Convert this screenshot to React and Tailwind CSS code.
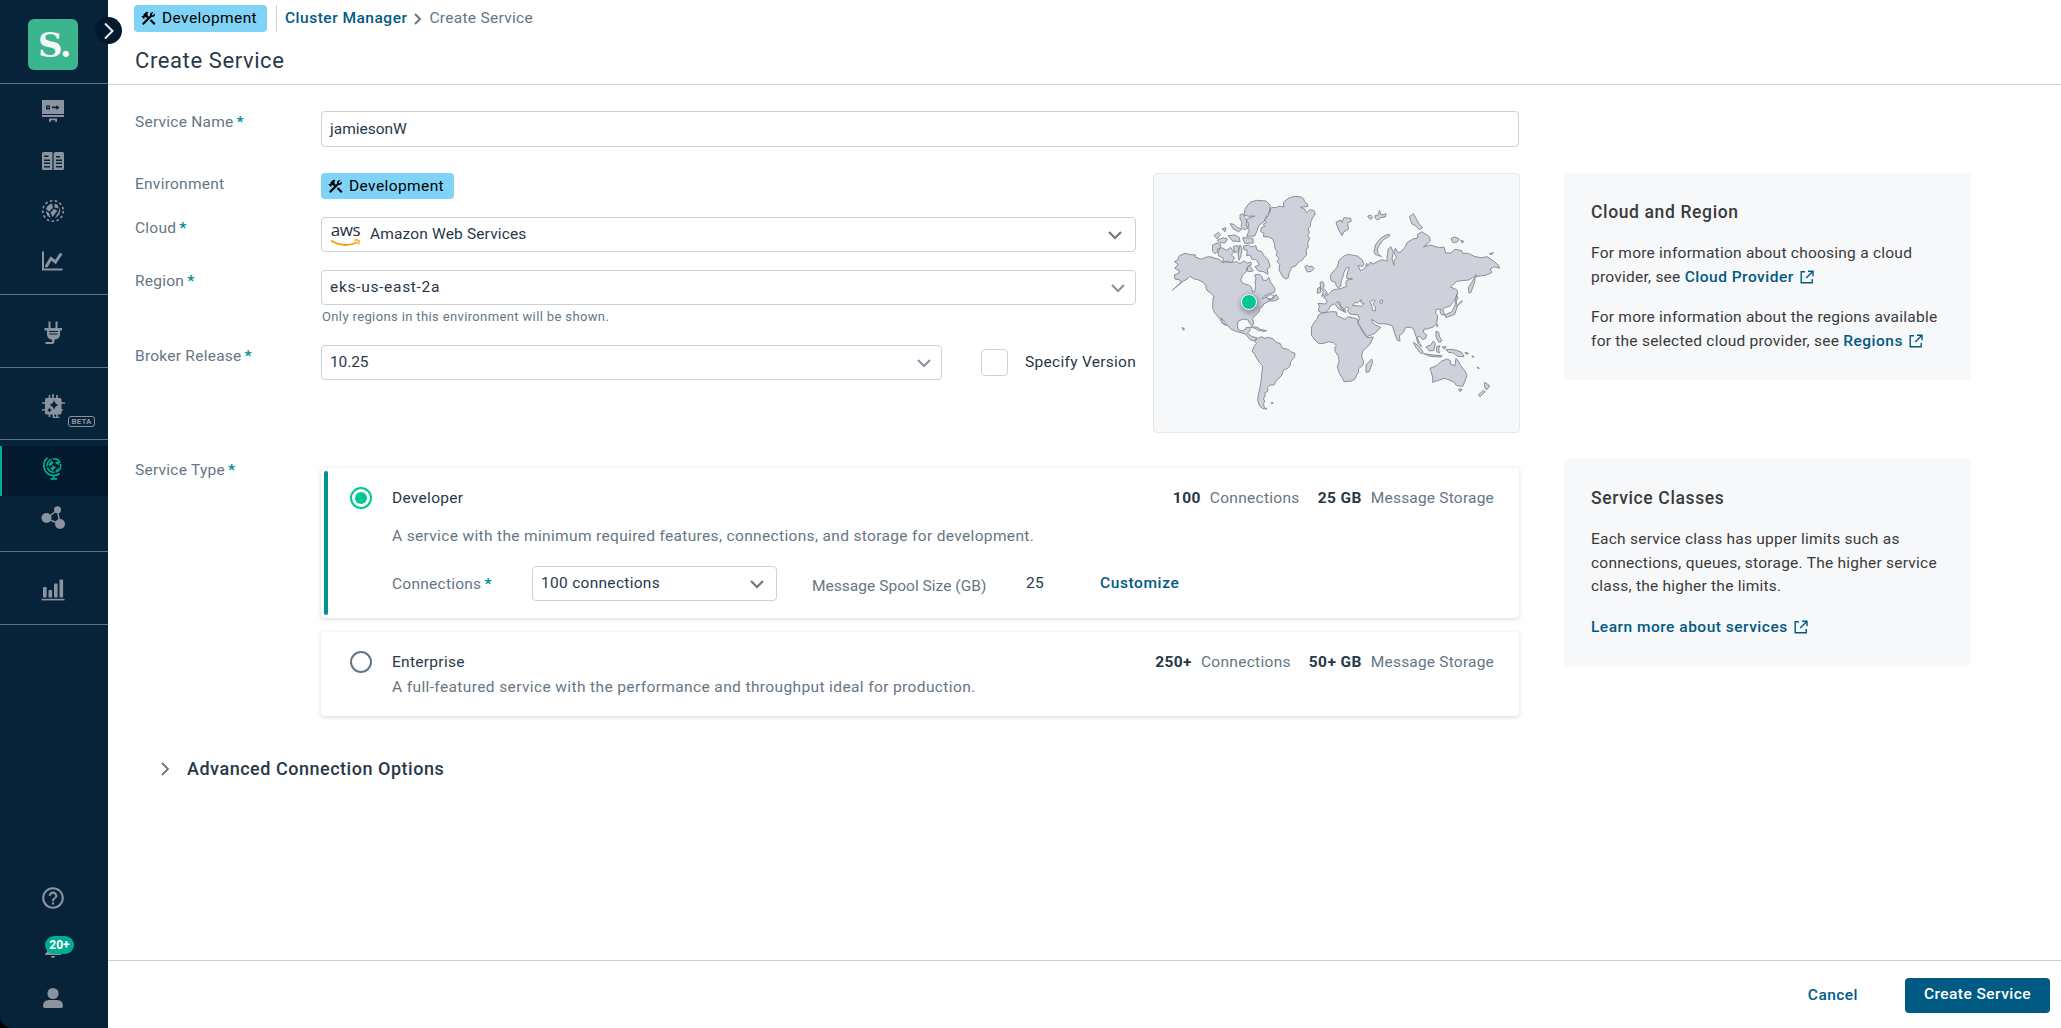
import React, { useState } from "react";
import { MdConstruction, MdHelpOutline, MdNotifications } from "react-icons/md";

const SERVICE_TYPES = [
  {
    id: "developer",
    name: "Developer",
    description:
      "A service with the minimum required features, connections, and storage for development.",
    connections: "100",
    storage: "25 GB",
  },
  {
    id: "enterprise",
    name: "Enterprise",
    description:
      "A full-featured service with the performance and throughput ideal for production.",
    connections: "250+",
    storage: "50+ GB",
  },
];

// Land outlines for the region map
const LAND = [
  // Greenland
  "M390 130L400 127L410 128L418 123L432 126L430 114L440 103L452 97L465 94L483 96L492 103L493 110L502 116L503 124L482 127L494 132L500 143L510 134L522 137L526 147L518 158L512 172L511 184L505 190L508 205L503 212L509 220L503 235L505 246L498 255L500 270L491 278L488 284L474 293L468 302L456 306L448 322L445 338L438 342L428 335L417 315L419 298L411 290L417 280L408 270L412 262L405 250L403 235L398 222L386 216L370 215L372 205L362 200L364 188L374 184L370 178L380 172L372 166L385 152Z",
  // Ellesmere and Baffin
  "M312 150L316 130L330 112L350 106L378 108L390 120L391 140L380 152L372 170L357 180L352 195L344 213L320 214L328 195L318 180L320 162L345 153L325 154Z",
  "M300 150L308 146L316 160L326 176L324 190L312 194L303 184L306 172L300 162Z",
  "M310 243L325 240L333 246L348 242L350 255L365 260L372 272L384 284L391 305L382 312L384 328L370 320L355 318L345 305L358 300L350 285L335 282L330 270L320 272L322 256L312 254Z",
  // arctic islands
  "M232 252L245 248L260 256L272 247L282 262L274 270L284 278L275 292L248 290L250 280L236 272Z",
  "M218 240L232 234L243 240L238 256L225 266L217 258Z",
  "M222 212L235 202L241 208L232 222Z", "M232 226L250 218L262 222L255 234L238 233Z",
  "M264 212L285 210L298 218L300 230L278 228Z", "M246 192L258 188L255 200Z",
  "M270 176L282 178L292 188L306 192L296 200L280 192Z", "M308 218L338 220L340 234L314 235Z",
  "M280 244L294 242L296 260L284 262Z", "M300 240L306 252L302 275L297 286L294 268Z", "M318 312L328 302L340 318L324 320Z",
  // North America
  "M103 290L112 286L118 272L135 265L150 269L167 270L165 276L185 283L196 277L210 275L225 280L240 284L246 293L262 288L270 293L290 290L300 296L312 287L320 294L333 292L334 300L323 304L322 316L308 330L302 345L308 355L325 360L334 366L338 381L344 380L347 365L345 352L348 340L344 330L358 328L366 335L370 346L380 346L386 337L392 352L405 370L403 382L385 387L372 394L366 402L380 396L386 405L398 402L408 388L416 402L402 408L390 408L372 416L367 425L358 430L357 440L345 452L337 460L341 474L337 483L329 475L325 465L310 462L295 468L292 480L295 494L306 498L316 494L318 488L331 487L329 498L322 504L336 515L350 518L345 528L330 524L318 508L300 502L290 500L272 492L262 480L252 468L243 458L247 470L260 482L248 476L238 460L225 445L218 430L219 398L223 396L210 382L200 375L197 362L190 352L176 345L160 341L150 334L142 342L120 354L97 376L124 353L120 345L105 342L103 330L116 325L118 317L104 310L115 298Z",
  // South America
  "M345 528L352 521L365 515L375 520L385 517L400 522L408 532L420 535L428 550L445 553L452 560L465 565L464 575L452 590L451 600L444 610L430 615L426 630L415 642L408 648L402 660L390 660L382 668L384 678L374 684L376 692L370 702L374 708L370 718L374 728L381 732L368 731L358 722L353 705L355 690L359 672L363 650L365 630L368 602L358 592L350 580L343 565L336 560L342 545L349 536Z",
  // Africa
  "M535 450L548 444L575 440L590 441L590 452L600 456L615 463L625 455L652 462L656 478L668 500L682 518L700 516L690 537L680 548L668 558L665 575L671 590L669 600L655 612L656 622L650 630L645 642L635 648L612 650L606 638L598 625L592 605L597 590L596 575L586 560L584 550L589 542L580 533L565 530L548 536L535 535L524 524L514 510L515 485L524 470L532 462Z",
  // Europe and Asia
  "M535 438L538 425L534 415L555 417L562 411L556 400L550 397L566 388L575 378L582 374L595 372L605 370L620 364L617 353L622 345L638 342L620 340L621 328L628 308L620 308L612 322L609 334L604 347L602 364L595 368L588 362L587 352L575 348L571 340L573 328L592 306L597 286L612 273L625 268L640 271L652 273L666 284L672 297L668 304L654 302L662 318L676 308L680 294L683 304L693 291L697 298L712 290L726 284L742 289L741 276L745 252L752 245L760 260L756 282L762 301L762 286L770 280L762 262L766 250L775 264L785 258L797 244L800 234L818 222L833 219L833 208L846 200L868 215L871 228L860 238L850 246L869 240L880 243L898 248L912 246L917 264L932 264L945 253L965 257L968 265L985 265L1005 275L1025 278L1042 275L1060 288L1077 302L1078 310L1064 305L1050 312L1056 322L1040 330L1025 332L1005 336L1004 350L993 382L987 384L985 368L998 348L1010 328L998 338L985 345L950 349L931 366L950 374L953 384L944 405L930 423L915 428L908 434L914 448L905 450L900 440L902 432L888 433L887 445L893 452L890 475L880 486L860 492L852 492L850 502L860 510L857 520L848 524L838 513L832 516L838 533L845 546L834 535L828 514L820 491L812 487L797 487L790 502L778 512L780 528L772 526L764 505L758 483L740 477L715 476L695 463L698 473L706 480L722 487L705 505L680 515L668 495L654 474L658 460L655 450L630 447L622 437L628 430L620 426L614 431L617 443L609 438L602 426L600 412L590 411L610 430L612 440L596 432L584 416L570 424L566 434L558 442L545 443Z",
  // islands
  "M540 352L548 350L552 360L551 370L560 380L562 386L545 394L550 380L542 368Z", "M533 370L541 366L542 382L532 385Z",
  "M494 305L500 301L508 305L516 303L522 311L514 319L502 321Z",
  "M588 172L602 165L606 172L612 158L632 160L634 168L622 175L626 192L612 200L606 212L596 195Z",
  "M683 153L692 150L698 158L690 163Z", "M705 152L715 150L718 136L724 150L738 146L736 156L722 158L714 165L706 160Z",
  "M808 155L820 146L828 160L836 175L848 188L838 194L826 182L815 176Z",
  "M702 262L706 240L720 222L735 211L748 208L748 214L730 224L718 240L712 255L714 265L724 275L706 268Z",
  "M933 220L945 216L958 222L950 232L938 232Z", "M962 226L972 229L966 234Z", "M1048 266L1060 263L1056 269Z",
  "M950 388L954 400L948 408L952 425L944 448L918 458L914 450L936 440L945 420Z", "M962 410L968 408L950 425Z",
  "M678 600L695 582L698 590L688 620L678 622Z",
  "M820 532L835 542L850 562L843 566L828 548Z", "M850 566L880 570L906 572L905 576L870 574Z",
  "M858 546L872 540L880 528L886 536L882 556L868 558Z", "M890 545L900 542L896 552L898 564L890 560Z",
  "M888 498L896 502L898 514L906 528L896 532L888 515Z", "M890 478L894 480L891 486Z",
  "M906 546L918 545L914 552Z", "M918 554L935 553L950 556L965 562L972 575L952 574L940 564L925 562Z", "M975 562L986 565L978 568Z",
  "M870 610L890 602L905 588L922 582L932 588L930 596L945 602L948 580L955 588L962 602L975 618L981 632L975 648L968 664L950 662L940 650L930 646L915 640L895 646L878 652L878 636Z",
  "M956 672L966 673L961 680Z", "M1034 652L1049 662L1040 675L1034 666Z", "M1015 690L1030 676L1036 680L1020 695Z",
  "M332 486L350 486L366 496L360 498L345 490Z", "M362 494L372 495L380 497L368 500Z",
  "M126 487L134 492L130 496Z", "M393 713L400 713L397 717Z", "M996 572L1002 576L998 577Z", "M1012 606L1018 610L1013 610Z",
];

// Black Sea, Caspian, Aral
const WATER = [
  "M637 422L645 412L652 414L665 403L662 412L673 417L664 424L648 422Z",
  "M690 412L700 404L706 408L698 416L706 425L706 438L697 436L696 424Z",
  "M720 406L728 405L727 414L720 415Z",
  "M378 395L392 389L402 391L395 401L384 402Z",
];

function WorldMap() {
  return (
    <div className="relative h-[260px] w-[367px] shrink-0 rounded border border-[#e6e7ea] bg-[#f7f8fa]">
      <svg className="absolute -inset-px" width="367" height="260" viewBox="39 24 1101 780">
        <g stroke="#84919b" strokeWidth="3" strokeLinejoin="round">
          <path d={LAND.join("")} fill="#cfd1da" />
          <path d={WATER.join("")} fill="#f7f8fa" />
        </g>
      </svg>
      <span className="absolute left-[87px] top-[120px] size-4 rounded-full border border-white bg-[#00c895] shadow-[1px_2px_5px_2px_rgba(60,70,80,0.4)]" />
    </div>
  );
}

function Icon({ children, className = "" }) {
  return (
    <svg
      width="24"
      height="24"
      viewBox="0 0 24 24"
      fill="currentColor"
      className={className}
    >
      {children}
    </svg>
  );
}

const DesignerIcon = () => (
  <Icon>
    <path fillRule="evenodd" d="M1 1h22v14H1zM5 6.4v4h4v-4zM6.4 7.7h1.4v1.4H6.4zM11 7.6v1.6h4.4V11l3.2-2.6L15.4 6v1.6z" />
    <path d="M1 16h22v2H1zM8 19.5h8V23h-1.8v-1.7H9.8V23H8z" />
  </Icon>
);

const CatalogIcon = () => (
  <Icon>
    <path fillRule="evenodd" d="M1 4.5Q1 3 2.500 3H11.400V21H2.500Q1 21 1 19.500zM3 6.500h4.500V8H3zM3 10.500h6V12H3zM3 13.500h6V15H3zM3 17h6v1.500H3z" />
    <path fillRule="evenodd" d="M12.600 4.500L14 3H21.500Q23 3 23 4.500V19.500Q23 21 21.500 21H12.600zM15 7h4v1.500h-4zM15 10.500h6V12h-6zM15 13.500h6V15h-6zM15 17h6v1.500h-6z" />
  </Icon>
);

const MeshIcon = () => (
  <Icon>
    <circle cx="12" cy="12" r="10.300" fill="none" stroke="currentColor" strokeWidth="1.600" strokeDasharray="2.600 2.400" />
    <path d="M11 4.500L12 9L8 12.500L5 10Q6.500 5.500 11 4.500zM13.500 4.500L17 6L17.500 9.500L13.500 8.500zM5 12L8 14L9.500 18.800Q5 17 5 12zM13 10L16.500 11.500L11.500 18L9.500 13.500zM18.600 8.500Q20.500 13 17 17L14 19L18 12z" />
  </Icon>
);

const InsightsIcon = () => (
  <Icon>
    <path d="M2 2.500v18h19.500" fill="none" stroke="currentColor" strokeWidth="2" />
    <path d="M5.500 17L10 9.500L14.500 13L19.500 5.500" fill="none" stroke="currentColor" strokeWidth="3" strokeLinecap="round" />
  </Icon>
);

const PlugIcon = () => (
  <Icon>
    <path d="M7.500 0.500h2V7h-2zM14.500 0.500h2V7h-2zM3.500 7h17.500v2.500h-2V14q-.6 3.500-4 4.500h-1.600V21q0 2-2 2H4.500v-2h6.500v-2.500H10q-3.500-1-4-4.500V9.500H3.500z" />
    <path d="M8 10.500h9M8.500 13h8" stroke="#07233a" strokeWidth="1" />
  </Icon>
);

const ChipIcon = () => (
  <Icon>
    <path d="M8.500 1v22M12 0v4M16 1v22M1 9h4M1 16h4M20 9h4M20 16h2M12.500 20v3.500h6" fill="none" stroke="currentColor" strokeWidth="1.700" />
    <rect x="4" y="4" width="16.500" height="16.500" rx="1.500" />
    <path d="M13 6q.8 4.200 5 5-4.200.8-5 5-.8-4.200-5-5 4.200-.8 5-5zM8.500 13.500q.5 2 2.500 2.500-2 .5-2.500 2.500-.5-2-2.500-2.500 2-.5 2.500-2.500z" fill="#07233a" />
  </Icon>
);

const GlobeIcon = () => (
  <Icon>
    <path d="M6.500 1.800A10 10 0 0 0 12 19.500Q16 19.800 18.500 17.500" fill="none" stroke="currentColor" strokeWidth="1.700" />
    <path d="M12.500 19v4M9.500 22.800h6.500" stroke="currentColor" strokeWidth="1.800" />
    <circle cx="13" cy="9.500" r="6.800" fill="none" stroke="currentColor" strokeWidth="1.500" strokeDasharray="9 1.200" />
    <path d="M10.500 4.500L12.500 7L9 10.500L7.500 8.500zM14 6L18 5.500L18.500 9L15.500 8zM12 9.500L15 11L11.500 15L9.500 12.500zM18.500 10.500L16.500 15L14 15.500z" />
  </Icon>
);

const ShareIcon = () => (
  <Icon>
    <path d="M5.500 12.500L16.500 4L19 18z" fill="none" stroke="currentColor" strokeWidth="1.500" />
    <circle cx="5.500" cy="12" r="5" />
    <circle cx="16.500" cy="3.700" r="3.500" />
    <circle cx="19" cy="18" r="5" />
  </Icon>
);

const BarsIcon = () => (
  <Icon>
    <path d="M0.500 20.800h23v1.600h-23z" />
    <rect x="2" y="9" width="3.600" height="10.500" rx="1" />
    <rect x="7.500" y="12" width="3.600" height="7.500" rx="1" />
    <rect x="13" y="5.500" width="3.600" height="14" rx="1" />
    <rect x="18.500" y="1.500" width="3.600" height="18" rx="1" />
  </Icon>
);

const UserIcon = () => (
  <Icon>
    <circle cx="12" cy="7.500" r="5.600" />
    <path d="M2 20q0-6 6-6h8q6 0 6 6q0 2-2 2H4q-2 0-2-2z" />
  </Icon>
);

function Chevron({ className = "text-[#72777d]" }) {
  return (
    <svg width="16" height="16" viewBox="0 0 16 16" className={className}>
      <path d="M2 5L8 11L14 5" fill="none" stroke="currentColor" strokeWidth="2.200" />
    </svg>
  );
}

function ExternalIcon() {
  return (
    <svg width="14" height="14" viewBox="0 0 14 14" className="ml-1.5 inline-block align-[-2px]">
      <path
        d="M5 1.800H1.200v11h11V9M8 1.200h5v5M13 1.200L6.200 8"
        fill="none"
        stroke="#015a83"
        strokeWidth="1.400"
      />
    </svg>
  );
}

function NavItem({ icon, active, beta }) {
  return (
    <div
      className={`relative flex h-[50px] items-center justify-center border-l-2 pb-1.5 pr-1 ${
        active
          ? "border-[#00ad93] bg-[#031a2e] text-[#00ad93]"
          : "border-transparent text-[#8b939e]"
      }`}
    >
      {icon}
      {beta && (
        <span className="absolute left-[66px] top-[32px] flex h-[11px] w-[27px] items-center justify-center rounded-[3px] border border-[#8b939e] text-[8px] font-bold tracking-[0.1px]">
          BETA
        </span>
      )}
    </div>
  );
}

function Sidebar() {
  return (
    <div className="h-full w-[108px] shrink-0 bg-black">
      <nav className="relative flex h-full flex-col rounded-bl-[12px] bg-[#07233a]">
        <div className="h-[84px] border-b border-[#5f7280] pl-7 pt-[19px]">
          <div className="flex h-[51px] w-[50px] items-center justify-center rounded-md bg-[#3bb58d] pl-0.5 font-['DejaVu_Serif'] text-[34px] font-bold leading-none tracking-[-1.5px] text-[#f5f7f6]">
            S.
          </div>
        </div>
        <button className="absolute left-[95px] top-[17px] z-10 flex size-[27px] items-center justify-center rounded-full bg-[#031a2e]">
          <svg width="12" height="18" viewBox="0 0 12 18">
            <path d="M2 1.500L9.500 9L2 16.500" fill="none" stroke="#e8ebee" strokeWidth="2" />
          </svg>
        </button>

        <div className="h-[211px] border-b border-[#5f7280] pt-[5px]">
          <NavItem icon={<DesignerIcon />} />
          <NavItem icon={<CatalogIcon />} />
          <NavItem icon={<MeshIcon />} />
          <NavItem icon={<InsightsIcon />} />
        </div>
        <div className="h-[73px] border-b border-[#5f7280] pt-4">
          <NavItem icon={<PlugIcon />} />
        </div>
        <div className="h-[72px] border-b border-[#5f7280] pt-4">
          <NavItem icon={<ChipIcon />} beta />
        </div>
        <div className="h-[112px] border-b border-[#5f7280] pt-1.5">
          <NavItem icon={<GlobeIcon />} active />
          <NavItem icon={<ShareIcon />} />
        </div>
        <div className="h-[73px] border-b border-[#5f7280] pt-4">
          <NavItem icon={<BarsIcon />} />
        </div>

        <div className="mt-auto pb-[2px]">
          <NavItem icon={<MdHelpOutline size={26} />} />
          <div className="relative">
            <NavItem icon={<MdNotifications size={24} />} />
            <span className="absolute left-[45px] top-[10px] flex h-[18px] w-[29px] items-center justify-center rounded-full bg-[#00ad93] text-[12px] font-bold text-white tracking-[0px]">
              20+
            </span>
          </div>
          <NavItem icon={<UserIcon />} />
        </div>
      </nav>
    </div>
  );
}

function EnvironmentBadge({ className = "h-[26px] pt-px" }) {
  return (
    <span
      className={`inline-flex w-[133px] items-center gap-[5px] rounded bg-[#7ed3f7] pl-1.5 tracking-[0.4px] text-black ${className}`}
    >
      <MdConstruction size={17} />
      Development
    </span>
  );
}

function Label({ children, required, className = "w-[186px]" }) {
  return (
    <label className={`shrink-0 leading-[22px] tracking-[0.25px] text-[#667685] ${className}`}>
      {children}
      {required && <span className="ml-[3px] font-bold text-[#009193]">*</span>}
    </label>
  );
}

function Select({ children, className = "", chevron }) {
  return (
    <div
      className={`flex h-[35px] items-center justify-between rounded border border-[#cfd1da] bg-white pl-2 ${className}`}
    >
      <span className="flex items-center">{children}</span>
      <Chevron className={chevron} />
    </div>
  );
}

function AwsLogo() {
  return (
    <span className="mr-[9px] flex w-[31px] flex-col items-center">
      <span className="-mt-1 mb-[3px] font-['Open_Sans'] text-[17px] font-medium leading-[13px] tracking-[-0.4px] text-[#252f3e]">
        aws
      </span>
      <svg width="31" height="8" viewBox="0 0 31 8" className="-mb-1">
        <path d="M1 1.500Q14 9.500 27.500 3.200" fill="none" stroke="#ff9900" strokeWidth="1.800" />
        <path d="M24.500 1.200Q31 -.3 28.500 5.500" fill="none" stroke="#ff9900" strokeWidth="1.200" />
      </svg>
    </span>
  );
}

function HelpPanel({ title, children }) {
  return (
    <aside className="h-[207px] w-[407px] rounded bg-[#f7f8fa] px-[27px] pt-[27px] leading-[23.5px] text-[#3a3a3a]">
      <h3 className="mb-[18px] text-[17.5px] font-medium leading-6 tracking-[0.63px]">{title}</h3>
      <div className="space-y-[17px] tracking-[0.24px]">{children}</div>
    </aside>
  );
}

function HelpLink({ children }) {
  return (
    <a className="font-medium tracking-[0.5px] text-[#015a83]">
      {children}
      <ExternalIcon />
    </a>
  );
}

function ServiceCard({ service, selected, onSelect, children }) {
  return (
    <div
      onClick={onSelect}
      className={`flex rounded bg-white p-[3px] shadow-[0_1px_4px_rgba(40,55,80,0.2)] ${
        selected ? "h-[150px]" : "h-[84px]"
      }`}
    >
      <div className={`w-1 rounded-sm ${selected ? "bg-[#009193]" : ""}`} />
      <div className="flex flex-1 pl-[22px] pr-[22px] pt-4">
        <span
          className={`flex size-[22px] shrink-0 items-center justify-center rounded-full border-2 ${
            selected ? "border-[#00c895]" : "border-[#667685]"
          }`}
        >
          {selected && <span className="size-3 rounded-full bg-[#00c895]" />}
        </span>
        <div className="ml-5 flex-1">
          <div className="flex justify-between leading-[22px]">
            <span>{service.name}</span>
            <span className="flex tracking-[0.2px] text-[#667685]">
              <b className="mr-[9px] font-bold tracking-[0.4px] text-[#273848]">
                {service.connections}
              </b>
              <span className="tracking-[0.3px]">Connections</span>
              <b className="ml-[18px] mr-[9px] font-bold tracking-[0.4px] text-[#273848]">
                {service.storage}
              </b>
              Message Storage
            </span>
          </div>
          <p
            className={`leading-[22px] text-[#667685] ${
              selected ? "mt-4 tracking-[0.34px]" : "mt-[3px] tracking-[0.38px]"
            }`}
          >
            {service.description}
          </p>
          {children}
        </div>
      </div>
    </div>
  );
}

export default function App() {
  const [serviceType, setServiceType] = useState("developer");

  return (
    <div className="flex h-[1028px] w-[2061px] overflow-hidden bg-white font-['Roboto',sans-serif] text-[15.5px] tracking-[0.29px] text-[#273848]">
      <Sidebar />

      <div className="flex flex-1 flex-col">
        <header className="h-[85px] border-b border-[#cfd1da] pl-[26px] pt-[5px]">
          <div className="flex h-[27px] items-center">
            <EnvironmentBadge className="h-[27px]" />
            <span className="ml-[9px] mr-2 h-[27px] w-px bg-[#cfd1da]" />
            <a className="font-medium tracking-[0.5px] text-[#015a83]">Cluster Manager</a>
            <svg width="8" height="12" viewBox="0 0 8 12" className="ml-[7px] mr-[7px]">
              <path d="M1 1L6 6L1 11" fill="none" stroke="#667685" strokeWidth="2" />
            </svg>
            <span className="text-[#667685]">Create Service</span>
          </div>
          <h1 className="mt-[14px] pl-px text-[22px] leading-[29px] tracking-[0.6px]">
            Create Service
          </h1>
        </header>

        <main className="flex flex-1 gap-11 pl-[27px] pt-[26px]">
          <div className="w-[1385px] pr-px">
            <div className="flex">
              <Label required>Service Name</Label>
              <div className="flex h-9 flex-1 items-center rounded border border-[#cfd1da] pl-2 pt-px tracking-[0px]">
                jamiesonW
              </div>
            </div>

            <div className="mt-[26px] flex h-[286px] gap-[17px]">
              <div className="flex-1">
                <div className="flex">
                  <Label>Environment</Label>
                  <EnvironmentBadge />
                </div>
                <div className="mt-[18px] flex">
                  <Label required>Cloud</Label>
                  <Select className="flex-1 pr-3">
                    <AwsLogo />
                    <span className="tracking-[0.15px]">Amazon Web Services</span>
                  </Select>
                </div>
                <div className="mt-[18px] flex">
                  <Label required>Region</Label>
                  <div className="flex-1">
                    <Select className="pr-[9px]" chevron="text-[#8a93a3]">
                      <span className="tracking-[0.7px]">eks-us-east-2a</span>
                    </Select>
                    <p className="h-10 pl-px pt-[3px] text-[13px] leading-[18px] tracking-[0.37px] text-[#667685]">
                      Only regions in this environment will be shown.
                    </p>
                  </div>
                </div>
                <div className="flex">
                  <Label required>Broker Release</Label>
                  <Select className="w-[621px] pr-[9px]" chevron="text-[#8a93a3]">
                    <span className="tracking-[-0.1px]">10.25</span>
                  </Select>
                  <div className="ml-[39px] flex items-center">
                    <span className="mr-[17px] size-[27px] rounded border border-[#cfd1da]" />
                    <span className="whitespace-nowrap">Specify Version</span>
                  </div>
                </div>
              </div>
              <WorldMap />
            </div>

            <div className="flex">
              <Label required>Service Type</Label>
              <div className="mt-[9px] flex-1 space-y-[14px]">
                {SERVICE_TYPES.map((service) => (
                  <ServiceCard
                    key={service.id}
                    service={service}
                    selected={serviceType === service.id}
                    onSelect={() => setServiceType(service.id)}
                  >
                    {service.id === "developer" && (
                      <div className="mt-[19px] flex h-[35px] items-center">
                        <Label required className="w-[140px]">
                          Connections
                        </Label>
                        <Select className="w-[245px] pr-[11px]">100 connections</Select>
                        <span className="ml-[35px] mt-1.5 w-[214px] tracking-[0.03px] text-[#667685]">
                          Message Spool Size (GB)
                        </span>
                        <span className="w-[74px]">25</span>
                        <a className="font-medium tracking-[0.6px] text-[#015a83]">Customize</a>
                      </div>
                    )}
                  </ServiceCard>
                ))}
              </div>
            </div>

            <div className="mt-[41px] flex items-center pl-[26px]">
              <svg width="9" height="14" viewBox="0 0 9 14" className="mr-[17px]">
                <path d="M1 1L7 7L1 13" fill="none" stroke="#667685" strokeWidth="1.800" />
              </svg>
              <h2 className="text-[18px] font-medium leading-6 tracking-[0.52px]">
                Advanced Connection Options
              </h2>
            </div>
          </div>

          <div className="space-y-[79px] pt-[62px]">
            <HelpPanel title="Cloud and Region">
              <p>
                For more information about choosing a cloud
                <br />
                provider, see <HelpLink>Cloud Provider</HelpLink>
              </p>
              <p>
                For more information about the regions available
                <br />
                for the selected cloud provider, see <HelpLink>Regions</HelpLink>
              </p>
            </HelpPanel>
            <HelpPanel title="Service Classes">
              <p>
                Each service class has upper limits such as
                <br />
                connections, queues, storage. The higher service
                <br />
                class, the higher the limits.
              </p>
              <p>
                <HelpLink>Learn more about services</HelpLink>
              </p>
            </HelpPanel>
          </div>
        </main>

        <footer className="flex h-[68px] items-center justify-end border-t border-[#cfd1da] pr-[11px] pt-px font-medium tracking-[0.45px]">
          <button className="mr-[47px] pt-px text-[#015a83]">Cancel</button>
          <button className="h-[35px] w-[145px] rounded bg-[#015a83] text-white">
            Create Service
          </button>
        </footer>
      </div>
    </div>
  );
}
